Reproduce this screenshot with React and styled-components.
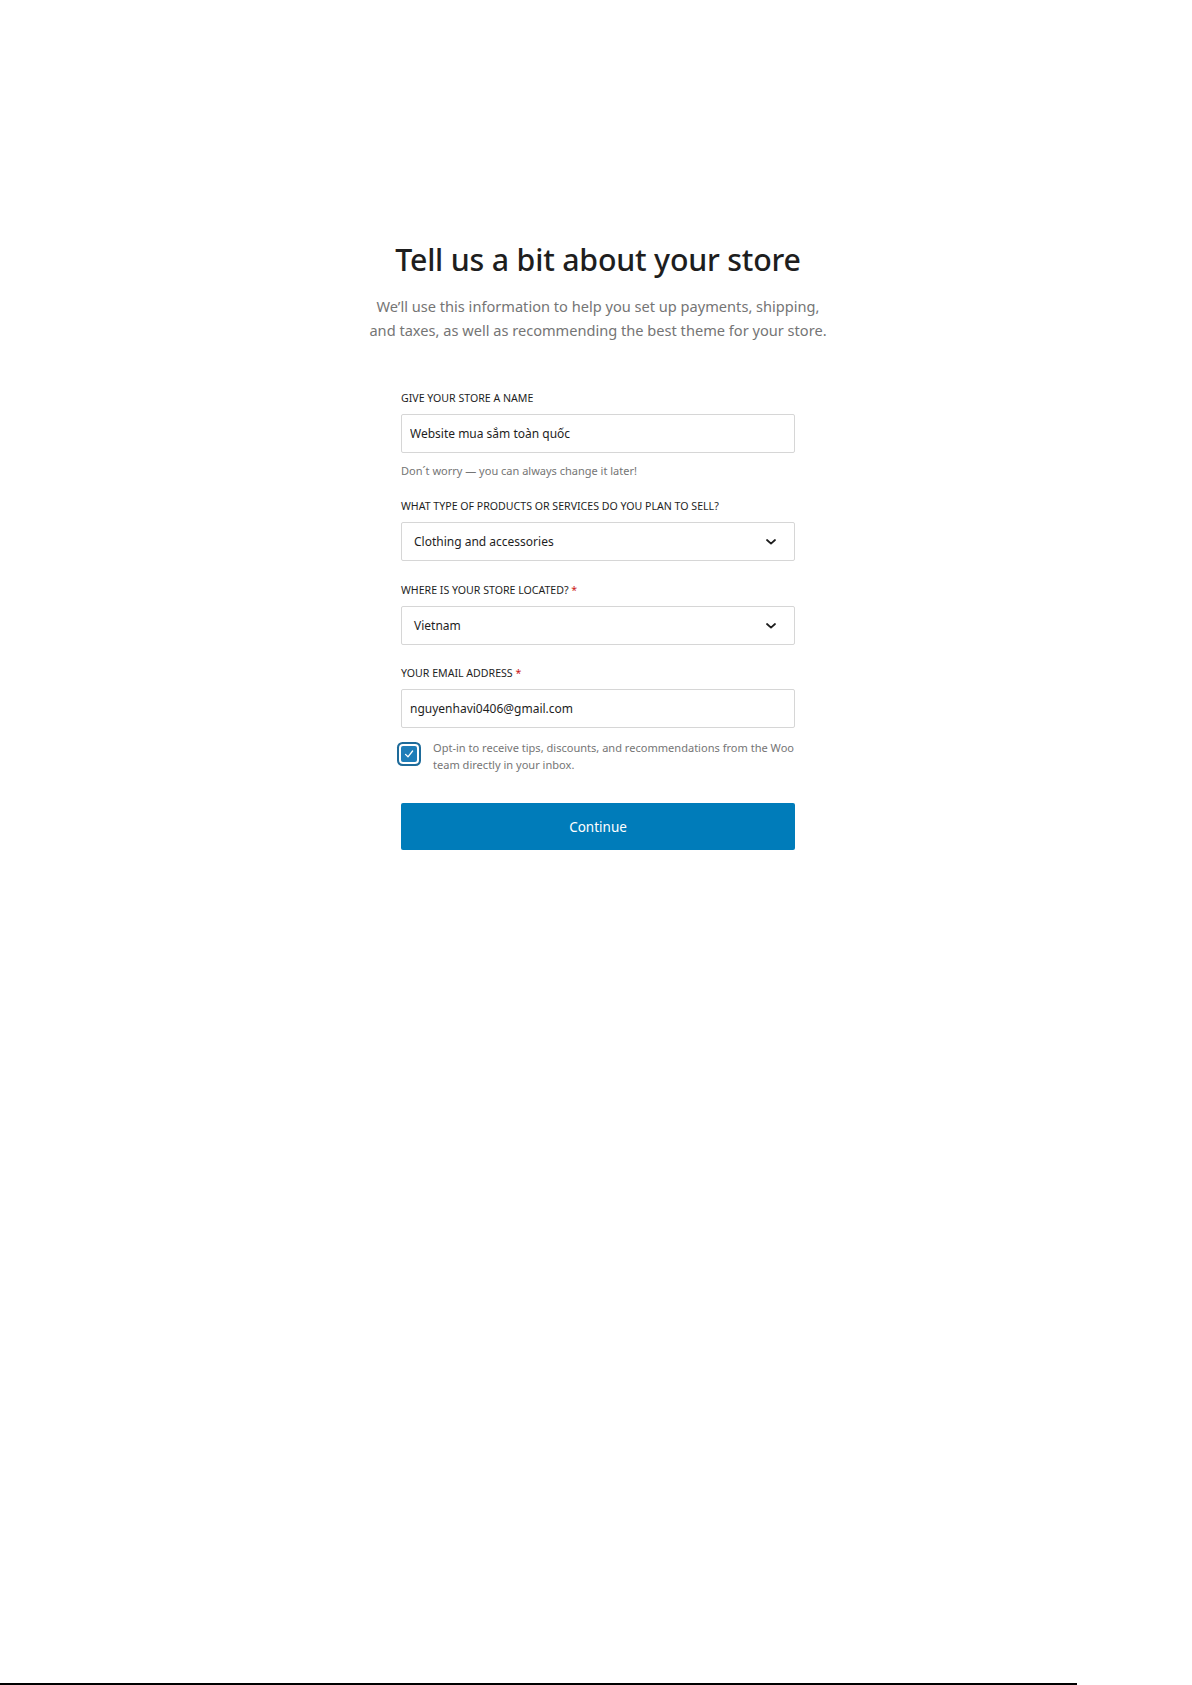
import React, { useState } from "react";
import styled, { createGlobalStyle } from "styled-components";

const GlobalStyle = createGlobalStyle`
  html, body {
    margin: 0;
    padding: 0;
    background: #fff;
  }
  body {
    font-family: "Noto Sans", "Open Sans", Arial, sans-serif;
    color: #1e1e1e;
  }
`;

const App = () => {
  // 폼 상태
  const [storeName, setStoreName] = useState("Website mua sắm toàn quốc");
  const [email, setEmail] = useState("nguyenhavi0406@gmail.com");
  const [optIn, setOptIn] = useState(true);

  return (
    <>
      <GlobalStyle />
      <Page>
        <Content>
          <Title>Tell us a bit about your store</Title>
          <Subtitle>
            We’ll use this information to help you set up payments, shipping,
            <br />
            and taxes, as well as recommending the best theme for your store.
          </Subtitle>

          <Form onSubmit={(e) => e.preventDefault()}>
            <Field $gap={19}>
              <Label>Give your store a name</Label>
              <TextInput
                type="text"
                value={storeName}
                onChange={(e) => setStoreName(e.target.value)}
              />
              <Help>Don´t worry — you can always change it later!</Help>
            </Field>

            <Field $gap={21}>
              <Label>What type of products or services do you plan to sell?</Label>
              <SelectBox>
                <span>Clothing and accessories</span>
                <Chevron />
              </SelectBox>
            </Field>

            <Field>
              <Label>
                Where is your store located? <Req>*</Req>
              </Label>
              <SelectBox>
                <span>Vietnam</span>
                <Chevron />
              </SelectBox>
            </Field>

            <Field>
              <Label>
                Your email address <Req>*</Req>
              </Label>
              <TextInput
                type="email"
                value={email}
                onChange={(e) => setEmail(e.target.value)}
              />
            </Field>

            <CheckRow>
              <CheckBox
                type="button"
                $checked={optIn}
                onClick={() => setOptIn(!optIn)}
              >
                {optIn && (
                  <svg width="12" height="12" viewBox="0 0 12 12">
                    <path
                      d="M2.5 6.4 L5 8.8 L9.6 3"
                      fill="none"
                      stroke="#fff"
                      strokeWidth="1.3"
                      strokeLinecap="round"
                      strokeLinejoin="round"
                    />
                  </svg>
                )}
              </CheckBox>
              <CheckText>
                Opt-in to receive tips, discounts, and recommendations from the Woo
                <br />
                team directly in your inbox.
              </CheckText>
            </CheckRow>

            <Button type="submit">Continue</Button>
          </Form>
        </Content>
        <BottomRule />
      </Page>
    </>
  );
};
export default App;

// 아래 화살표 아이콘
const Chevron = () => (
  <svg width="14" height="14" viewBox="0 0 14 14">
    <path
      d="M3 5 L7 8.6 L11 5"
      fill="none"
      stroke="#1e1e1e"
      strokeWidth="1.8"
      strokeLinecap="round"
      strokeLinejoin="round"
    />
  </svg>
);

// 페이지 전체
const Page = styled.div`
  min-height: 100vh;
  display: flex;
  flex-direction: column;
  box-sizing: border-box;
`;

const Content = styled.div`
  display: flex;
  flex-direction: column;
  align-items: center;
  padding-top: 240px;
  padding-left: 4px;
`;

const Title = styled.h1`
  margin: 0;
  font-size: 30.3px;
  line-height: 40px;
  font-weight: 500;
  color: #1e1e1e;
  letter-spacing: -0.2px;
`;

const Subtitle = styled.p`
  margin: 14px 0 0;
  font-size: 14.6px;
  line-height: 24px;
  color: #757575;
  text-align: center;
`;

const Form = styled.form`
  width: 394px;
  margin-top: 48px;
  display: flex;
  flex-direction: column;
`;

// 필드 사이 간격은 prop으로
const Field = styled.div`
  display: flex;
  flex-direction: column;
  margin-bottom: ${(p) => p.$gap ?? 20}px;
`;

const Label = styled.label`
  font-size: 10.6px;
  line-height: 16px;
  text-transform: uppercase;
  color: #1e1e1e;
  margin-bottom: 8px;
`;

const Req = styled.span`
  color: #cc1818;
`;

const TextInput = styled.input`
  box-sizing: border-box;
  height: 39px;
  width: 100%;
  border: 1px solid #d6d6d6;
  border-radius: 2px;
  padding: 0 8px;
  font-family: inherit;
  font-size: 12px;
  color: #1e1e1e;
  outline: none;
`;

const Help = styled.span`
  margin-top: 10px;
  font-size: 11px;
  line-height: 16px;
  color: #757575;
`;

const SelectBox = styled.div`
  box-sizing: border-box;
  height: 39px;
  border: 1px solid #d6d6d6;
  border-radius: 2px;
  padding: 0 16px 0 12px;
  display: flex;
  align-items: center;
  justify-content: space-between;
  font-size: 12px;
  color: #1e1e1e;
`;

const CheckRow = styled.div`
  display: flex;
  align-items: flex-start;
  gap: 16px;
  margin-top: -9px;
`;

const CheckBox = styled.button`
  flex: none;
  box-sizing: border-box;
  width: 16px;
  height: 16px;
  margin: 7px 0 0 0;
  padding: 0;
  border: none;
  border-radius: 2px;
  background: ${(p) => (p.$checked ? "#1e7db8" : "#fff")};
  box-shadow: 0 0 0 2px #fff, 0 0 0 4px #1e6b9a;
  display: flex;
  align-items: center;
  justify-content: center;
  cursor: pointer;
`;

const CheckText = styled.span`
  font-size: 11.05px;
  line-height: 17px;
  color: #757575;
  white-space: nowrap;
`;

const Button = styled.button`
  margin-top: 30px;
  height: 47px;
  width: 100%;
  border: none;
  border-radius: 2px;
  background: #007cba;
  color: #fff;
  font-family: inherit;
  font-size: 13.5px;
  cursor: pointer;
`;

// 하단 선
const BottomRule = styled.div`
  margin-top: auto;
  width: 1077px;
  height: 2px;
  background: #000;
`;
